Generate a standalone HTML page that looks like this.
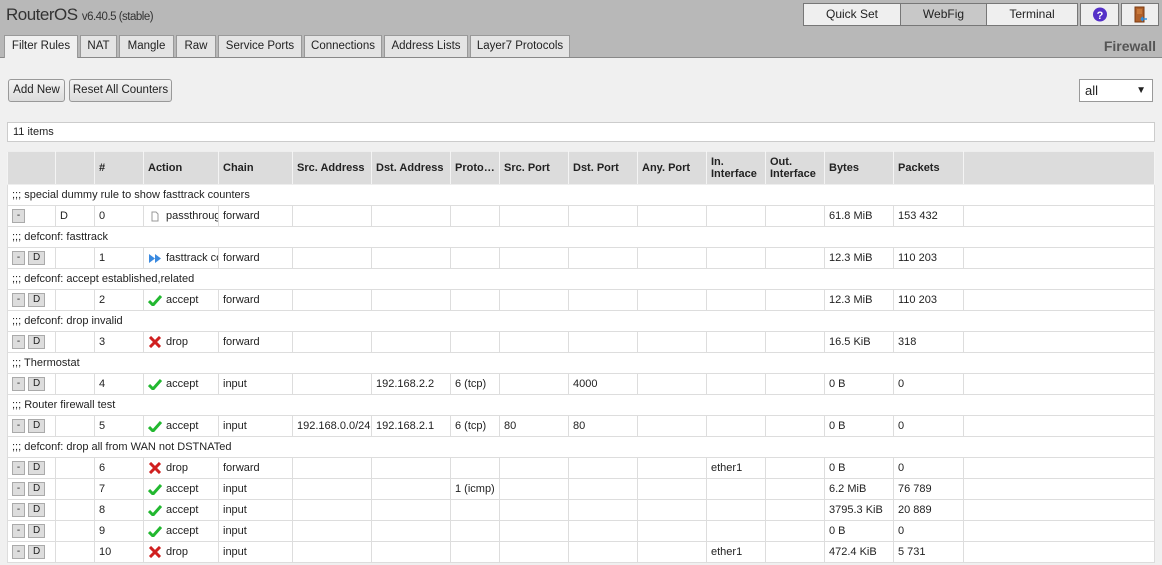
<!DOCTYPE html><html><head><style>
body{margin:0;width:1162px;height:565px;overflow:hidden;background:#f0f0f0;font-family:"Liberation Sans",sans-serif;font-size:11px;color:#222;position:relative}
#top{position:absolute;left:0;top:0;width:1162px;height:57px;background:#b8b8b8;border-bottom:1px solid #888}
.abs{position:absolute}
.tb{position:absolute;top:3px;height:23px;background:#efefef;border:1px solid #777;box-sizing:border-box;text-align:center;line-height:21px;font-size:12px}
.tab{position:absolute;top:35px;height:22px;background:#e4e4e4;border:1px solid #999;border-bottom:none;box-sizing:border-box;line-height:21px;font-size:11.5px;text-align:center;white-space:nowrap}
.btn{position:absolute;top:79px;height:23px;border:1px solid #999;border-radius:3px;background:linear-gradient(#f4f4f4,#dcdcdc);box-sizing:border-box;line-height:21px;text-align:center;white-space:nowrap;font-size:11.5px}
table{position:absolute;left:7px;top:151px;border-collapse:collapse;table-layout:fixed;width:1148px;background:#fff}
td,th{border:1px solid #ddd;height:20px;padding:0 4px;white-space:nowrap;overflow:hidden;text-align:left;font-size:11px}
th{background:#dcdcdc;height:32px;font-weight:bold;border-color:#eee #f4f4f4;line-height:12px}
.b{display:inline-block;height:12px;line-height:12px;border:1px solid #aaa;background:#ddd;font-size:10px;text-align:center;vertical-align:middle}
.ic{display:inline-block;width:14px;vertical-align:middle;margin-right:4px}
</style></head><body>
<div id="top"></div>
<div class="abs" style="left:6px;top:5px;font-size:17px;color:#333;letter-spacing:-0.5px">RouterOS <span style="font-size:11.5px">v6.40.5 (stable)</span></div>
<div class="tb" style="left:803px;width:98px">Quick Set</div>
<div class="tb" style="left:900px;width:87px;background:#c8c8c8">WebFig</div>
<div class="tb" style="left:986px;width:92px">Terminal</div>
<div class="tb" style="left:1080px;width:39px"><svg width="16" height="16" viewBox="0 0 16 16" style="margin-top:3px"><circle cx="8" cy="7.5" r="7" fill="#5530c8"/><text x="8" y="12" font-size="11" font-weight="bold" fill="#fff" text-anchor="middle" font-family="Liberation Sans">?</text></svg></div>
<div class="tb" style="left:1121px;width:38px"><svg width="16" height="18" viewBox="0 0 16 18" style="margin-top:2px"><rect x="3" y="1" width="9" height="15" fill="#b0602a" stroke="#7a3a10"/><rect x="5" y="3" width="5" height="5" fill="#c8783a"/><path d="M9 13h6M9 13l2-2M9 13l2 2" stroke="#3090e0" stroke-width="1.5" fill="none"/></svg></div>
<div class="tab" style="left:4px;width:74px;background:#f0f0f0;height:23px">Filter Rules</div>
<div class="tab" style="left:80px;width:37px">NAT</div>
<div class="tab" style="left:119px;width:55px">Mangle</div>
<div class="tab" style="left:176px;width:40px">Raw</div>
<div class="tab" style="left:218px;width:84px">Service Ports</div>
<div class="tab" style="left:304px;width:78px">Connections</div>
<div class="tab" style="left:384px;width:84px">Address Lists</div>
<div class="tab" style="left:470px;width:100px">Layer7 Protocols</div>
<div class="abs" style="right:6px;top:38px;font-size:14px;font-weight:bold;color:#555">Firewall</div>
<div class="btn" style="left:8px;width:57px">Add New</div>
<div class="btn" style="left:69px;width:103px">Reset All Counters</div>
<div class="abs" style="left:1079px;top:79px;width:74px;height:23px;border:1px solid #999;background:#fff;box-sizing:border-box;font-size:13px;line-height:21px;padding-left:5px">all<span style="position:absolute;right:6px;font-size:10px">▼</span></div>
<div class="abs" style="left:7px;top:122px;width:1148px;height:20px;border:1px solid #ccc;background:#fff;box-sizing:border-box;line-height:18px;padding-left:5px">11 items</div>
<table>
<colgroup><col style="width:48px"><col style="width:39px"><col style="width:49px"><col style="width:75px"><col style="width:74px"><col style="width:79px"><col style="width:79px"><col style="width:49px"><col style="width:69px"><col style="width:69px"><col style="width:69px"><col style="width:59px"><col style="width:59px"><col style="width:69px"><col style="width:70px"><col></colgroup>
<tr><th></th><th></th><th>#</th><th>Action</th><th>Chain</th><th>Src. Address</th><th>Dst. Address</th><th>Proto…</th><th>Src. Port</th><th>Dst. Port</th><th>Any. Port</th><th>In.<br>Interface</th><th>Out.<br>Interface</th><th>Bytes</th><th>Packets</th><th></th></tr>
<tr><td colspan="16">;;; special dummy rule to show fasttrack counters</td></tr>
<tr><td><span class="b" style="width:11px">-</span></td><td>D</td><td>0</td><td><svg class="ic" width="10" height="11" viewBox="0 0 10 11"><path d="M2 1h4l2 2v7H2z" fill="#fff" stroke="#999"/></svg>passthrough</td><td>forward</td><td></td><td></td><td></td><td></td><td></td><td></td><td></td><td></td><td>61.8 MiB</td><td>153 432</td><td></td></tr>
<tr><td colspan="16">;;; defconf: fasttrack</td></tr>
<tr><td><span class="b" style="width:11px">-</span> <span class="b" style="width:15px">D</span></td><td></td><td>1</td><td><svg class="ic" width="14" height="11" viewBox="0 0 14 11"><path d="M1 1l6 4.5-6 4.5zM7 1l6 4.5-6 4.5z" fill="#3a8ae0"/></svg>fasttrack connection</td><td>forward</td><td></td><td></td><td></td><td></td><td></td><td></td><td></td><td></td><td>12.3 MiB</td><td>110 203</td><td></td></tr>
<tr><td colspan="16">;;; defconf: accept established,related</td></tr>
<tr><td><span class="b" style="width:11px">-</span> <span class="b" style="width:15px">D</span></td><td></td><td>2</td><td><svg class="ic" width="14" height="12" viewBox="0 0 14 12"><path d="M1 7l4 4 8-9" stroke="#22b830" stroke-width="3" fill="none"/></svg>accept</td><td>forward</td><td></td><td></td><td></td><td></td><td></td><td></td><td></td><td></td><td>12.3 MiB</td><td>110 203</td><td></td></tr>
<tr><td colspan="16">;;; defconf: drop invalid</td></tr>
<tr><td><span class="b" style="width:11px">-</span> <span class="b" style="width:15px">D</span></td><td></td><td>3</td><td><svg class="ic" width="14" height="12" viewBox="0 0 14 12"><path d="M2 1l10 10M12 1L2 11" stroke="#d02020" stroke-width="3"/></svg>drop</td><td>forward</td><td></td><td></td><td></td><td></td><td></td><td></td><td></td><td></td><td>16.5 KiB</td><td>318</td><td></td></tr>
<tr><td colspan="16">;;; Thermostat</td></tr>
<tr><td><span class="b" style="width:11px">-</span> <span class="b" style="width:15px">D</span></td><td></td><td>4</td><td><svg class="ic" width="14" height="12" viewBox="0 0 14 12"><path d="M1 7l4 4 8-9" stroke="#22b830" stroke-width="3" fill="none"/></svg>accept</td><td>input</td><td></td><td>192.168.2.2</td><td>6 (tcp)</td><td></td><td>4000</td><td></td><td></td><td></td><td>0 B</td><td>0</td><td></td></tr>
<tr><td colspan="16">;;; Router firewall test</td></tr>
<tr><td><span class="b" style="width:11px">-</span> <span class="b" style="width:15px">D</span></td><td></td><td>5</td><td><svg class="ic" width="14" height="12" viewBox="0 0 14 12"><path d="M1 7l4 4 8-9" stroke="#22b830" stroke-width="3" fill="none"/></svg>accept</td><td>input</td><td>192.168.0.0/24</td><td>192.168.2.1</td><td>6 (tcp)</td><td>80</td><td>80</td><td></td><td></td><td></td><td>0 B</td><td>0</td><td></td></tr>
<tr><td colspan="16">;;; defconf: drop all from WAN not DSTNATed</td></tr>
<tr><td><span class="b" style="width:11px">-</span> <span class="b" style="width:15px">D</span></td><td></td><td>6</td><td><svg class="ic" width="14" height="12" viewBox="0 0 14 12"><path d="M2 1l10 10M12 1L2 11" stroke="#d02020" stroke-width="3"/></svg>drop</td><td>forward</td><td></td><td></td><td></td><td></td><td></td><td></td><td>ether1</td><td></td><td>0 B</td><td>0</td><td></td></tr>
<tr><td><span class="b" style="width:11px">-</span> <span class="b" style="width:15px">D</span></td><td></td><td>7</td><td><svg class="ic" width="14" height="12" viewBox="0 0 14 12"><path d="M1 7l4 4 8-9" stroke="#22b830" stroke-width="3" fill="none"/></svg>accept</td><td>input</td><td></td><td></td><td>1 (icmp)</td><td></td><td></td><td></td><td></td><td></td><td>6.2 MiB</td><td>76 789</td><td></td></tr>
<tr><td><span class="b" style="width:11px">-</span> <span class="b" style="width:15px">D</span></td><td></td><td>8</td><td><svg class="ic" width="14" height="12" viewBox="0 0 14 12"><path d="M1 7l4 4 8-9" stroke="#22b830" stroke-width="3" fill="none"/></svg>accept</td><td>input</td><td></td><td></td><td></td><td></td><td></td><td></td><td></td><td></td><td>3795.3 KiB</td><td>20 889</td><td></td></tr>
<tr><td><span class="b" style="width:11px">-</span> <span class="b" style="width:15px">D</span></td><td></td><td>9</td><td><svg class="ic" width="14" height="12" viewBox="0 0 14 12"><path d="M1 7l4 4 8-9" stroke="#22b830" stroke-width="3" fill="none"/></svg>accept</td><td>input</td><td></td><td></td><td></td><td></td><td></td><td></td><td></td><td></td><td>0 B</td><td>0</td><td></td></tr>
<tr><td><span class="b" style="width:11px">-</span> <span class="b" style="width:15px">D</span></td><td></td><td>10</td><td><svg class="ic" width="14" height="12" viewBox="0 0 14 12"><path d="M2 1l10 10M12 1L2 11" stroke="#d02020" stroke-width="3"/></svg>drop</td><td>input</td><td></td><td></td><td></td><td></td><td></td><td></td><td>ether1</td><td></td><td>472.4 KiB</td><td>5 731</td><td></td></tr>
</table>
</body></html>
